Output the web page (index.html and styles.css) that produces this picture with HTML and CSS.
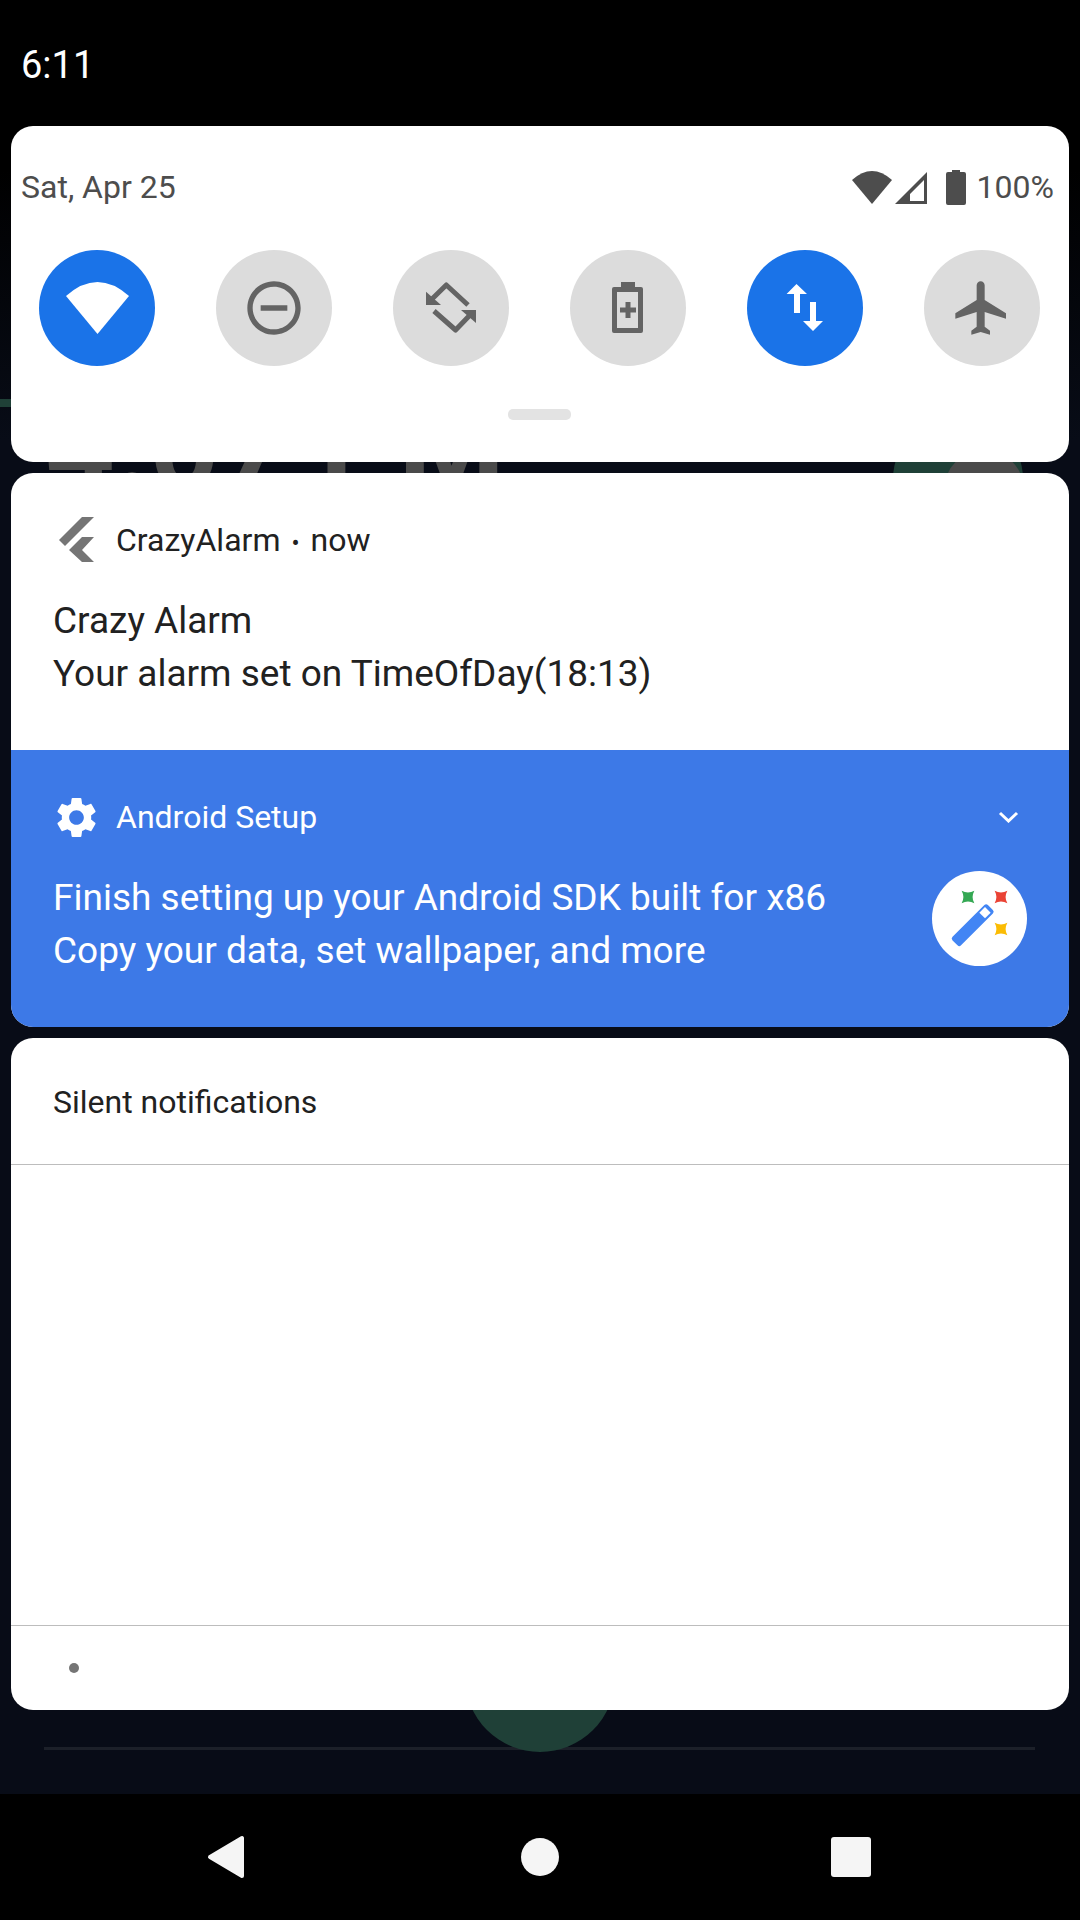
FILE: index.html
```html
<!doctype html>
<html>
<head>
    <meta charset="utf-8">
    <title>Notification shade</title>
    <link rel="stylesheet" href="styles.css">
</head>
<body>

<!-- home screen showing through behind the shade -->
<div class="wallpaper">
    <div class="wall-strip"></div>
    <div class="wall-clock">4:07 PM</div>
    <div class="wall-switch"></div>
    <div class="wall-knob"></div>
    <div class="wall-line"></div>
    <div class="wall-fab"></div>
</div>

<div class="screen">
    <div class="status-bar">6:11</div>

    <div class="cards">
        <section class="card quick">
            <div class="quick-top">
                <span class="date">Sat, Apr 25</span>
                <div class="status-icons">
                    <svg class="st-wifi" width="40" height="33" viewBox="0 0 40 33"><path d="M0 9Q20 -9 40 9L20 33Z"/></svg>
                    <svg class="st-signal" width="32" height="32" viewBox="0 0 32 32"><path fill-rule="evenodd" d="M32 0V32H0ZM29 8 L15 22 V29 H29Z"/></svg>
                    <svg class="st-batt" width="20" height="35" viewBox="0 0 20 35"><path d="M6 0H14V2H18Q20 2 20 4V33Q20 35 18 35H2Q0 35 0 33V4Q0 2 2 2H6Z"/></svg>
                    <span class="percent">100%</span>
                </div>
            </div>
            <div class="tiles">
                <div class="tile on">
                    <svg width="63" height="52" viewBox="0 0 63 52"><path d="M0 14Q31.5 -14 63 14L31.5 52Z"/></svg>
                </div>
                <div class="tile">
                    <svg width="64" height="64" viewBox="0 0 24 24"><path d="M12 2C6.48 2 2 6.48 2 12s4.48 10 10 10 10-4.48 10-10S17.52 2 12 2zm0 18c-4.41 0-8-3.59-8-8s3.59-8 8-8 8 3.59 8 8-3.59 8-8 8zM7 11v2h10v-2H7z"/></svg>
                </div>
                <div class="tile">
                    <svg width="64" height="64" viewBox="0 0 64 64">
                        <path class="line" d="M12 24L27.3 9L49 29"/>
                        <path d="M7 29V15.7L22 29Z"/>
                        <path class="line" d="M15 35L36.6 54L52 38"/>
                        <path d="M57 34H42L57 47Z"/>
                    </svg>
                </div>
                <div class="tile">
                    <svg width="64" height="64" viewBox="0 0 64 64">
                        <path fill-rule="evenodd" d="M25 6H39V11H45Q47 11 47 13V55Q47 57 45 57H18Q16 57 16 55V13Q16 11 18 11H25ZM21 16V52H42V16Z"/>
                        <path d="M29.5 26H34.5V31.5H40V36.5H34.5V42H29.5V36.5H24V31.5H29.5Z"/>
                    </svg>
                </div>
                <div class="tile on">
                    <svg width="64" height="64" viewBox="0 0 64 64">
                        <path d="M13.6 18L23.5 8L34 18H27V37H21V18Z"/>
                        <path d="M37 26H43V45H50L40 55L30 45H37Z"/>
                    </svg>
                </div>
                <div class="tile">
                    <svg width="64" height="64" viewBox="0 0 24 24"><path d="M21 16v-2l-8-5V3.5c0-.83-.67-1.5-1.5-1.5S10 2.67 10 3.5V9l-8 5v2l8-2.5V19l-2 1.5V22l3.5-1 3.5 1v-1.5L13 19v-5.5l8 2.5z"/></svg>
                </div>
            </div>
            <div class="handle"></div>
        </section>

        <section class="card alerts">
            <div class="notif">
                <div class="notif-head">
                    <svg class="app-flutter" width="38" height="46" viewBox="0 0 38 46">
                        <path d="M36 0H24L1 23L7 29Z"/>
                        <path d="M24 20H36L24 33L36 45H24L11 33Z"/>
                    </svg>
                    <span>CrazyAlarm<span class="sep">•</span>now</span>
                </div>
                <div class="notif-text">
                    <div>Crazy Alarm</div>
                    <div>Your alarm set on TimeOfDay(18:13)</div>
                </div>
            </div>
            <div class="notif setup">
                <div class="notif-head">
                    <svg class="app-gear" width="49" height="49" viewBox="0 0 24 24"><path d="M19.14,12.94c0.04-0.3,0.06-0.61,0.06-0.94c0-0.32-0.02-0.64-0.07-0.94l2.03-1.58c0.18-0.14,0.23-0.41,0.12-0.61l-1.92-3.32c-0.12-0.22-0.37-0.29-0.59-0.22l-2.39,0.96c-0.5-0.38-1.03-0.7-1.62-0.94L14.4,2.81c-0.04-0.24-0.24-0.41-0.48-0.41h-3.84c-0.24,0-0.43,0.17-0.47,0.41L9.25,5.35C8.66,5.59,8.12,5.92,7.63,6.29L5.24,5.33c-0.22-0.08-0.47,0-0.59,0.22L2.74,8.87C2.62,9.08,2.66,9.34,2.86,9.48l2.03,1.58C4.84,11.36,4.8,11.69,4.8,12s0.02,0.64,0.07,0.94l-2.03,1.58c-0.18,0.14-0.23,0.41-0.12,0.61l1.92,3.32c0.12,0.22,0.37,0.29,0.59,0.22l2.39-0.96c0.5,0.38,1.03,0.7,1.62,0.94l0.36,2.54c0.05,0.24,0.24,0.41,0.48,0.41h3.84c0.24,0,0.44-0.17,0.47-0.41l0.36-2.54c0.59-0.24,1.13-0.56,1.62-0.94l2.39,0.96c0.22,0.08,0.47,0,0.59-0.22l1.92-3.32c0.12-0.22,0.07-0.47-0.12-0.61L19.14,12.94z M12,15.6c-1.98,0-3.6-1.62-3.6-3.6s1.62-3.6,3.6-3.6s3.6,1.62,3.6,3.6S13.98,15.6,12,15.6z"/></svg>
                    <span>Android Setup</span>
                    <svg class="chevron" width="21" height="12" viewBox="0 0 21 12"><path d="M2 2L10.5 10L19 2"/></svg>
                </div>
                <div class="setup-row">
                    <div class="notif-text">
                        <div>Finish setting up your Android SDK built for x86</div>
                        <div>Copy your data, set wallpaper, and more</div>
                    </div>
                    <svg class="wizard" width="95" height="95" viewBox="0 0 95 95">
                        <circle cx="47.5" cy="47.5" r="47.5" fill="#fff"/>
                        <path d="M36 17Q38 24 45 26Q38 28 36 35Q34 28 27 26Q34 24 36 17Z" fill="#34a853" transform="rotate(45 36 26)"/>
                        <path d="M69 17Q71 24 78 26Q71 28 69 35Q67 28 60 26Q67 24 69 17Z" fill="#ea4335" transform="rotate(45 69 26)"/>
                        <path d="M69 49Q71 56 78 58Q71 60 69 67Q67 60 60 58Q67 56 69 49Z" fill="#fbbc04" transform="rotate(45 69 58)"/>
                        <rect x="15.7" y="48.2" width="50" height="12" rx="2.5" fill="#4285f4" transform="rotate(-45 40.7 54.2)"/>
                        <rect x="49" y="37.7" width="8" height="8" fill="#fff" transform="rotate(45 53 41.7)"/>
                    </svg>
                </div>
            </div>
        </section>

        <section class="card silent">
            <div class="silent-head">Silent notifications</div>
            <div class="silent-body"></div>
            <div class="silent-foot"><span class="dot"></span></div>
        </section>
    </div>

    <div class="nav-bar">
        <svg width="48" height="52" viewBox="0 0 48 52"><path d="M38 7V45L6 26Z" class="back"/></svg>
        <div class="nav-home"></div>
        <div class="nav-recent"></div>
    </div>
</div>

</body>
</html>
```

FILE: styles.css
```css
html, body { margin: 0; padding: 0; background: #000; }
body {
    position: relative;
    width: 1080px; height: 1920px;
    overflow: hidden;
    font-family: Roboto, sans-serif;
}

/* behind the shade */
.wallpaper {
    position: absolute; left: 0; top: 0;
    width: 1080px; height: 1920px;
    background: linear-gradient(#000 170px, #080c17 440px);
}
.wall-strip {
    position: absolute; left: 0; top: 399px;
    width: 60px; height: 8px;
    background: #1f4037;
}
.wall-clock {
    position: absolute; left: 45px; top: 448px;
    height: 0;
    font-size: 122px; line-height: 0; font-weight: 700;
    color: #4a4a4a;
    white-space: nowrap;
}
.wall-switch {
    position: absolute; left: 893px; top: 414px;
    width: 130px; height: 130px;
    border-radius: 50%;
    background: #1f4037;
}
.wall-knob {
    position: absolute; left: 944px; top: 450px;
    width: 80px; height: 80px;
    border-radius: 50%;
    background: #4a4a4a;
}
.wall-line {
    position: absolute; left: 44px; top: 1747px;
    width: 991px; height: 3px;
    background: #1c2029;
}
.wall-fab {
    position: absolute; left: 465px; top: 1602px;
    width: 150px; height: 150px;
    border-radius: 50%;
    background: #1f4037;
}

.screen {
    position: relative;
    display: flex; flex-direction: column;
    height: 1920px;
}
.status-bar {
    height: 126px; box-sizing: border-box;
    padding: 43px 0 0 21px;
    font-size: 38px; line-height: 44px;
    color: #fff;
}
.cards {
    flex: 1;
    display: flex; flex-direction: column; gap: 11px;
    padding: 0 11px;
}
.card {
    background: #fff;
    border-radius: 22px;
    overflow: hidden;
}

/* quick settings */
.quick { height: 336px; display: flex; flex-direction: column; }
.quick-top {
    display: flex; justify-content: space-between; align-items: center;
    height: 50px; margin-top: 36px;
    padding: 0 15px 0 10px;
    color: #4d4d4d;
}
.date { font-size: 32px; }
.status-icons { display: flex; align-items: center; }
.status-icons svg { fill: #4d4d4d; }
.st-signal { margin-left: 3px; margin-top: 2px; }
.st-batt { margin-left: 19px; }
.percent { margin-left: 11px; font-size: 32px; }
.tiles {
    display: flex; justify-content: space-between;
    margin-top: 38px;
    padding: 0 29px 0 28px;
}
.tile {
    display: flex; align-items: center; justify-content: center;
    width: 116px; height: 116px;
    border-radius: 50%;
    background: #dcdcdc;
}
.tile svg { fill: #646464; }
.tile .line { fill: none; stroke: #646464; stroke-width: 5; stroke-linejoin: round; }
.tile.on { background: #1a73e8; }
.tile.on svg { fill: #fff; }
.handle {
    width: 63px; height: 11px;
    margin: 43px 0 0 497px;
    border-radius: 5px;
    background: #e3e3e3;
}

/* notifications */
.alerts { height: 554px; }
.notif {
    height: 277px; box-sizing: border-box;
    padding: 43px 0 0 43px;
    color: #212121;
}
.notif-head {
    display: flex; align-items: center;
    height: 48px;
    font-size: 32px;
}
.app-flutter { margin-left: 4px; margin-right: 20px; fill: #757575; }
.sep { margin: 0 11px; font-size: 24px; }
.notif-text {
    margin-top: 31px;
    margin-left: -1px;
    font-size: 37px; line-height: 52.5px;
}
.setup { background: #3d79e7; color: #fff; }
.app-gear { margin-left: -2px; margin-right: 15px; fill: #fff; }
.chevron {
    margin-left: auto; margin-right: 50px;
    fill: none; stroke: #fff; stroke-width: 3;
}
.setup-row {
    display: flex; justify-content: space-between; align-items: flex-start;
    padding-right: 42px;
}
.wizard { margin-top: 30px; }

/* silent section */
.silent { height: 672px; display: flex; flex-direction: column; }
.silent-head {
    height: 127px; box-sizing: border-box;
    padding: 44px 0 0 42px;
    font-size: 32px; line-height: 40px;
    color: #212121;
    border-bottom: 1px solid #bdbdbd;
}
.silent-body { flex: 1; }
.silent-foot {
    display: flex; align-items: center;
    height: 84px;
    border-top: 1px solid #bdbdbd;
}
.dot {
    width: 10px; height: 10px;
    margin-left: 58px;
    border-radius: 50%;
    background: #757575;
}

/* nav */
.nav-bar {
    position: relative;
    height: 126px;
    background: #000;
}
.nav-bar svg { position: absolute; left: 204px; top: 37px; }
.back { fill: #f5f5f5; stroke: #f5f5f5; stroke-width: 4; stroke-linejoin: round; }
.nav-home {
    position: absolute; left: 521px; top: 44px;
    width: 38px; height: 38px;
    border-radius: 50%;
    background: #f5f5f5;
}
.nav-recent {
    position: absolute; left: 831px; top: 43px;
    width: 40px; height: 40px;
    border-radius: 3px;
    background: #f5f5f5;
}
```
